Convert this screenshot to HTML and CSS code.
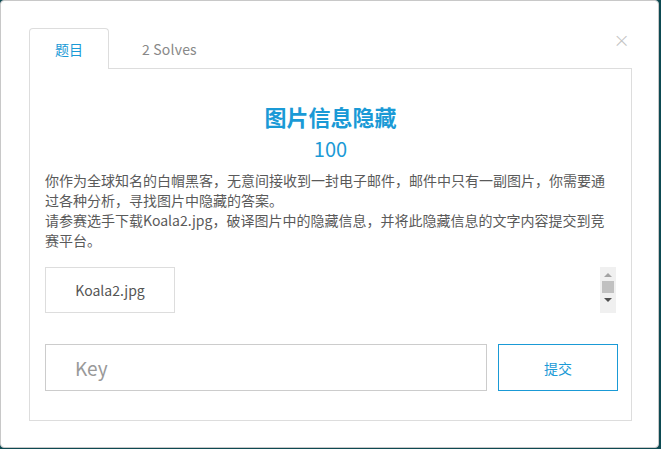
FILE: index.html
```html
<!DOCTYPE html>
<html>
<head>
<meta charset="utf-8">
<link rel="stylesheet" href="styles.css">
</head>
<body>
<div class="modal">
  <div class="close">×</div>
  <div class="tabs">
    <div class="tab active">题目</div>
    <div class="tab">2 Solves</div>
  </div>
  <div class="panel">
    <h1 class="title">图片信息隐藏</h1>
    <div class="score">100</div>
    <div class="desc">你作为全球知名的白帽黑客，无意间接收到一封电子邮件，邮件中只有一副图片，你需要通过各种分析，寻找图片中隐藏的答案。<br>请参赛选手下载Koala2.jpg，破译图片中的隐藏信息，并将此隐藏信息的文字内容提交到竞赛平台。</div>
    <div class="files">
      <div class="file">Koala2.jpg</div>
      <div class="scroll">
        <span class="up"></span>
        <span class="thumb"></span>
        <span class="down"></span>
      </div>
    </div>
    <div class="submit-row">
      <div class="key">Key</div>
      <div class="btn">提交</div>
    </div>
  </div>
</div>
</body>
</html>
```

FILE: styles.css
```css
html, body {
  margin: 0;
  padding: 0;
  background: #0d4a52;
  width: 661px;
  height: 449px;
  overflow: hidden;
  font-family: "Noto Sans CJK SC", "Noto Sans", sans-serif;
}
.modal {
  position: relative;
  box-sizing: border-box;
  width: 659px;
  height: 448px;
  background: #fff;
  border-radius: 4px;
  border: 1px solid #c8c8c8;
  padding: 27px 28px 0 28px;
}
.close {
  position: absolute;
  top: 29px;
  right: 28px;
  font-size: 20px;
  line-height: 20px;
  color: #c4c4c4;
  font-family: "DejaVu Sans", sans-serif;
  font-weight: 300;
}
.tabs {
  display: flex;
  height: 40px;
  box-sizing: border-box;
}
.tab {
  box-sizing: border-box;
  height: 40px;
  padding: 0 32px;
  display: flex;
  align-items: center;
  font-size: 14px;
  color: #888;
  letter-spacing: 0.2px;
  border: 1px solid transparent;
  border-bottom: none;
}
.tab.active {
  width: 80px;
  justify-content: center;
  padding: 0;
  color: #1a9ad6;
  letter-spacing: 0;
  border-color: #ddd;
  border-radius: 4px 4px 0 0;
  background: #fff;
  position: relative;
  z-index: 1;
  height: 41px;
}
.panel {
  box-sizing: border-box;
  border: 1px solid #ddd;
  width: 603px;
  height: 353px;
  padding: 0 15px;
}
.title {
  margin: 32px 0 0;
  text-align: center;
  font-size: 22px;
  line-height: 30px;
  font-weight: bold;
  color: #1a9ad6;
}
.score {
  text-align: center;
  font-size: 20px;
  line-height: 28px;
  color: #1a9ad6;
  margin-top: 4px;
}
.desc {
  margin-top: 7px;
  font-size: 14px;
  line-height: 20px;
  color: #5a5a5a;
}
.files {
  margin-top: 17px;
  display: flex;
  justify-content: space-between;
  height: 46px;
}
.file {
  box-sizing: border-box;
  width: 130px;
  height: 46px;
  border: 1px solid #ddd;
  display: flex;
  align-items: center;
  justify-content: center;
  font-size: 14px;
  color: #555;
}
.scroll {
  width: 16px;
  height: 46px;
  background: #f0f0f0;
  display: flex;
  flex-direction: column;
  align-items: center;
}
.up {
  margin-top: 6px;
  width: 0; height: 0;
  border-left: 4px solid transparent;
  border-right: 4px solid transparent;
  border-bottom: 4px solid #a3a3a3;
}
.thumb {
  margin-top: 4px;
  width: 12px;
  height: 12px;
  background: #c1c1c1;
}
.down {
  margin-top: 5px;
  width: 0; height: 0;
  border-left: 4px solid transparent;
  border-right: 4px solid transparent;
  border-top: 4px solid #505050;
}
.submit-row {
  margin-top: 31px;
  display: flex;
  gap: 11px;
}
.key {
  box-sizing: border-box;
  flex-shrink: 0;
  width: 442px;
  height: 47px;
  border: 1px solid #ccc;
  display: flex;
  align-items: center;
  padding-left: 29px;
  font-size: 19px;
  color: #999;
}
.btn {
  box-sizing: border-box;
  flex-shrink: 0;
  width: 120px;
  height: 47px;
  border: 1px solid #1a9ad6;
  display: flex;
  align-items: center;
  justify-content: center;
  font-size: 14px;
  color: #1a9ad6;
}
```
